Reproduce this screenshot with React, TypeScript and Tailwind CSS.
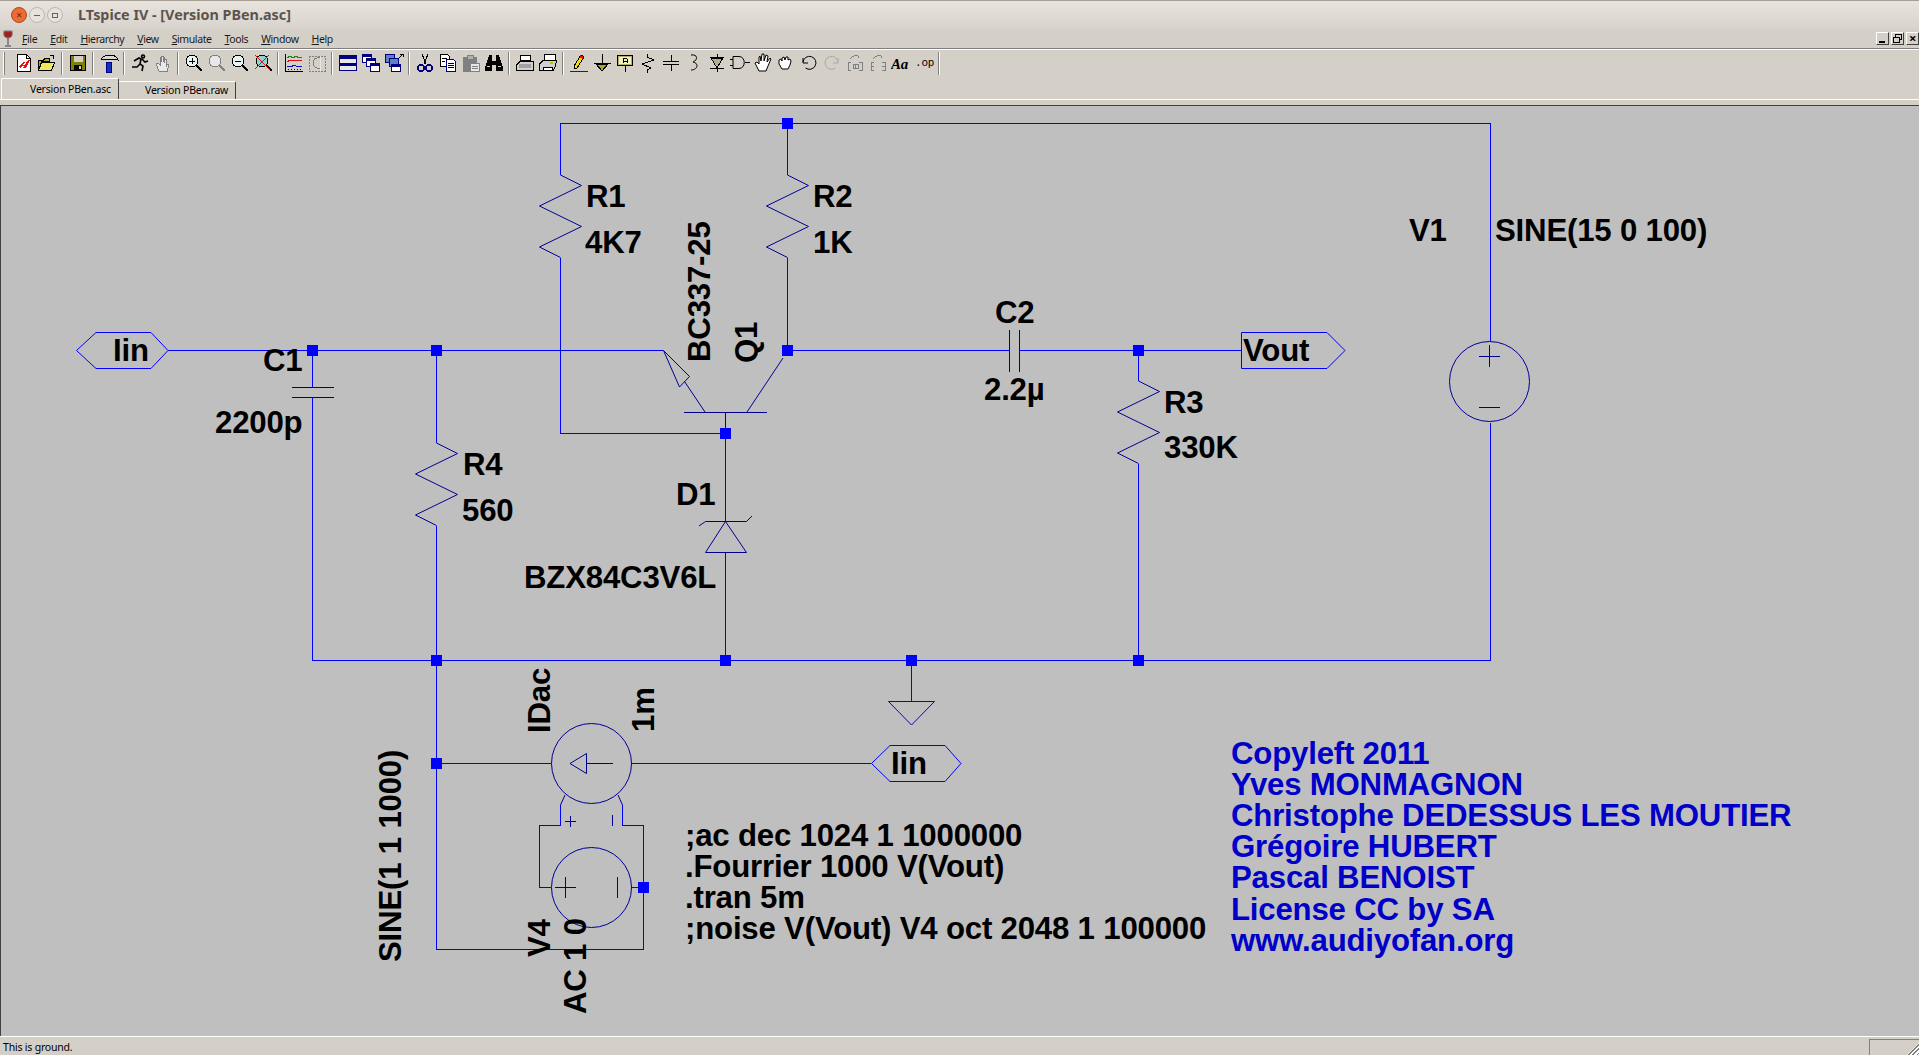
import React from 'react';

const WIRE = '#0000ff';
const SYM = '#000090';

const Sep = () => (
  <div className="w-[2px] h-[23px] mx-[3px] border-l border-l-[#808080] border-r border-r-white shrink-0" />
);

const Btn: React.FC<{ children: React.ReactNode }> = ({ children }) => (
  <div className="w-[23px] h-[23px] flex items-center justify-center shrink-0">
    <svg width="20" height="20" viewBox="0 0 20 20" fill="none" shapeRendering="crispEdges">
      {children}
    </svg>
  </div>
);

const G = '#808080';

const toolbar: (React.ReactNode | 'sep')[] = [
  <>
    <path d="M3.5 1.5h9l4 4v13h-13z" fill="#fff" stroke="#000" />
    <path d="M12.5 1.5v4h4" stroke="#000" />
    <path d="M5 14l4-5h2l-2 3h2l3-5h2l-4 8h-3l1-2H8l-1 2z" fill="#e81010" />
  </>,
  <>
    <path d="M1.5 7.5h5l1-2h5v3h-8l-3 9z" fill="#b8a800" stroke="#000" />
    <path d="M4.5 9.5h13l-3 8h-13z" fill="#f0e860" stroke="#000" />
    <path d="M13 2l4 1-1 3" stroke="#000" />
  </>,
  'sep',
  <>
    <path d="M2.5 2.5h15v15h-15z" fill="#808000" stroke="#000" />
    <path d="M5.5 3h9v6h-9z" fill="#d4d0c8" />
    <path d="M6 12h8v5H6z" fill="#000" />
    <path d="M11 13h2v3h-2z" fill="#d4d0c8" />
  </>,
  'sep',
  <>
    <path d="M2 7c1-3 5-5 9-5 4 0 7 2 8 5l-4-1H6c-2 0-3 0-4 1z" fill="#d8d8d8" stroke="#000" />
    <path d="M7.5 9h5v10h-5z" fill="#1030c0" stroke="#000080" />
  </>,
  'sep',
  <>
    <path d="M13 2c-2 0-2 2 0 3 2 0 2-3 0-3zM4 8l5-3 2 1-1 5 3 2-1 5M10 11l-3 3-5 0M12 6l3 3 3-1" stroke="#000" strokeWidth="1.6" shapeRendering="auto" />
  </>,
  <>
    <path d="M6 18l-3-7 2-1 2 2V4h1.5v5-6H10v6-5h1.5v6-4H13v8l1-3h2l-2 8z" fill="#e8e8e8" stroke={G} />
  </>,
  'sep',
  <>
    <circle cx="8" cy="8" r="6" fill="#e8f4f4" stroke="#000" />
    <path d="M5 8h6M8 5v6" stroke="#000" />
    <path d="M12 12l6 6" stroke="#000" strokeWidth="2" />
  </>,
  <>
    <circle cx="8" cy="8" r="6" fill="#e8e8e8" stroke={G} />
    <path d="M12 12l6 6" stroke={G} strokeWidth="2" />
  </>,
  <>
    <circle cx="8" cy="8" r="6" fill="#e8f4f4" stroke="#000" />
    <path d="M5 8h6" stroke="#000" />
    <path d="M12 12l6 6" stroke="#000" strokeWidth="2" />
  </>,
  <>
    <circle cx="9" cy="8" r="6" fill="#90d0d0" stroke="#000" />
    <path d="M13 12l6 6" stroke="#000" strokeWidth="2" />
    <path d="M2 2l15 15M2 16L16 2" stroke="#e01010" strokeWidth="1.4" />
  </>,
  'sep',
  <>
    <path d="M1.5 1v17h17" stroke="#000" />
    <path d="M3 5l3-2 3 2 3-2 3 2 3-1" stroke="#208020" />
    <path d="M3 9l3-2 4 1 3-1 5 1" stroke="#e01010" />
    <path d="M3 13l4 1 3-2 4 2 4-1" stroke="#1010c0" />
    <path d="M1 16h18" stroke="#000" strokeDasharray="1 2" />
  </>,
  <>
    <path d="M2 3h16v15H2z" stroke={G} strokeDasharray="2 1" />
    <path d="M13 5c-5-1-7 2-7 5s2 6 7 5" stroke={G} />
    <path d="M13 3v15" stroke="#e8e8e8" />
  </>,
  'sep',
  <>
    <path d="M1.5 2.5h17v15h-17z" fill="#e8e8e8" stroke="#000080" />
    <path d="M1 3h18v3H1zM1 10h18v3H1z" fill="#000080" />
  </>,
  <>
    <path d="M1.5 1.5h9v8h-9z" fill="#fff" stroke="#000080" />
    <path d="M5.5 5.5h9v8h-9z" fill="#fff" stroke="#000080" />
    <path d="M9.5 10.5h9v8h-9z" fill="#fff" stroke="#000080" />
    <path d="M2 2h8v2H2zM6 6h8v2H6zM10 11h8v2h-8z" fill="#000080" />
  </>,
  <>
    <path d="M1.5 1.5h9v8h-9z" fill="#6080c0" stroke="#000080" />
    <path d="M5.5 5.5h9v8h-9z" fill="#6080c0" stroke="#000080" />
    <path d="M7.5 11.5h9v7h-9z" fill="#fff" stroke="#000080" />
    <path d="M8 12h8v2H8z" fill="#000080" />
    <path d="M15 5l4-4M16 1h3v3" stroke="#000" />
  </>,
  'sep',
  <>
    <path d="M7 1l4 10M13 1L9 11" stroke="#000" />
    <circle cx="6" cy="15" r="3" stroke="#000080" strokeWidth="1.5" />
    <circle cx="14" cy="15" r="3" stroke="#000080" strokeWidth="1.5" />
  </>,
  <>
    <path d="M2.5 1.5h7l2 2v10h-9z" fill="#fff" stroke="#000" />
    <path d="M8.5 6.5h7l2 2v10h-9z" fill="#fff" stroke="#000080" />
    <path d="M4 5h5M4 8h3M10 10h6M10 12h6M10 14h6" stroke="#000" />
  </>,
  <>
    <path d="M2.5 4.5h13v14h-13z" fill={G} stroke={G} />
    <path d="M6 2h6v4H6z" fill="#b0b0b0" stroke={G} />
    <path d="M9.5 10.5h9v8h-9z" fill="#e8e8e8" stroke={G} />
    <path d="M11 13h6M11 15h6" stroke={G} />
  </>,
  <>
    <path d="M5 2h3v6h4V2h3l4 13v3h-7v-6H8v6H1v-3z" fill="#000" />
    <path d="M3 13h3M14 13h3" stroke="#d4d0c8" />
  </>,
  'sep',
  <>
    <path d="M5.5 2.5h10v5h-10z" fill="#fff" stroke="#000" />
    <path d="M1.5 12l4-4h13v9h-17z" fill="#d0d0d0" stroke="#000" />
    <path d="M4 11h12v4H4z" fill="#a0a0a0" />
  </>,
  <>
    <path d="M6.5 1.5h11v6h-11z" fill="#fff" stroke="#000" />
    <path d="M1.5 11l4-4h13l-1 6-2 4h-14z" fill="#d0d0d0" stroke="#000" />
    <path d="M5 14h9v3H5z" fill="#fff" stroke="#000" />
    <path d="M12 10h3" stroke="#c0c000" strokeWidth="2" />
  </>,
  'sep',
  <>
    <path d="M5 13L12 2l3 2-7 11-3 1z" fill="#f0e000" stroke="#000" />
    <path d="M11 3l3 2" stroke="#e01010" strokeWidth="2" />
    <path d="M1 18h18" stroke="#1010d0" />
  </>,
  <>
    <path d="M10 1v9M1.5 10.5h17" stroke="#000" />
    <path d="M4 11h12l-6 7z" fill="#a8a830" stroke="#000" />
  </>,
  <>
    <path d="M2.5 2.5h15v10h-15z" fill="#b8b060" stroke="#000" strokeWidth="1" />
    <path d="M4 4h12v7H4z" fill="#f0f0c0" />
    <path d="M8 10V6l2-1 2 1v4M8 8h4" stroke="#000" />
    <path d="M10 13v6" stroke="#000" />
  </>,
  <path d="M9 1v3l7 3-12 4 9 4-4 2v3" stroke="#000" />,
  <path d="M10 2v6M10 12v6M2 8.5h16M2 11.5h16" stroke="#000" />,
  <path d="M7 2c7-1 7 5 2 7 6 1 5 8-2 8" stroke="#000" shapeRendering="auto" />,
  <>
    <path d="M3 4.5h14M10 1v18M3 15.5h14" stroke="#000" />
    <path d="M4 5h12l-6 10z" fill="#b0b090" stroke="#000" />
  </>,
  <>
    <path d="M3 3.5h6c7 0 7 12 0 12H3zM0 6.5h3M0 12.5h3M15 9.5h5" stroke="#000" fill="#d4d0c8" shapeRendering="auto" />
  </>,
  <>
    <path d="M6 18L2 10l2-1 2 2 0-7 1-1 1 5 1-7 2 0 0 7 2-6 2 1-1 6 3-4 1 1-3 7-2 5z" fill="#fff" stroke="#000" shapeRendering="auto" />
  </>,
  <>
    <path d="M6 16l-3-5 0-4 2-1 1 2 0-3 2-1 1 3 1-3 2 0 0 3 2-1 1 2-1 4-2 4z" fill="#fff" stroke="#000" shapeRendering="auto" />
  </>,
  <>
    <path d="M4 9a6.5 6.5 0 1 1 2.5 6M4 5v5h5" stroke="#000" shapeRendering="auto" />
  </>,
  <>
    <path d="M16 9a6.5 6.5 0 1 0-2.5 6M16 5v5h-5" stroke="#a8a8a8" shapeRendering="auto" />
  </>,
  <>
    <path d="M3 9h3M3 9v8h3M14 9h3v8h-3" stroke={G} />
    <path d="M8 11h5v4H8zM10 11v4" stroke={G} />
    <path d="M5 6c2-3 6-4 8-3l1 2" stroke={G} />
  </>,
  <>
    <path d="M3 9h3M3 9v8h3M14 9h3v8h-3" stroke={G} />
    <path d="M3 13h3M14 13h3" stroke={G} />
    <path d="M5 6c2-3 6-4 8-3l1 2" stroke={G} />
  </>,
  <text x="0" y="16" fontFamily="'Liberation Serif', serif" fontStyle="italic" fontWeight="700" fontSize="15" fill="#000">Aa</text>,
  <text x="1" y="13" fontFamily="'Liberation Mono', monospace" fontSize="11" fill="#000">.op</text>,
  'sep',
];

const menus: [string, string][] = [
  ['F', 'ile'],
  ['E', 'dit'],
  ['H', 'ierarchy'],
  ['V', 'iew'],
  ['S', 'imulate'],
  ['T', 'ools'],
  ['W', 'indow'],
  ['H', 'elp'],
];

const Junction: React.FC<{ x: number; y: number }> = ({ x, y }) => (
  <rect x={x - 5} y={y - 5} width={11} height={11} fill={WIRE} />
);

// zigzag for a resistor, y = top of the symbol
const Res: React.FC<{ x: number; y: number }> = ({ x, y }) => (
  <path
    d={`M${x + 0.5} ${y}l21 10.5-42 20.5 42 20.5-42 20.5 21 10.5`}
    fill="none"
    stroke={SYM}
    strokeWidth={1}
    shapeRendering="auto"
  />
);

const Lbl: React.FC<{ x: number; y: number; up?: boolean; fill?: string; children: React.ReactNode }> = ({
  x,
  y,
  up,
  fill = '#000',
  children,
}) => (
  <text
    x={x}
    y={y}
    fill={fill}
    fontSize={31.2}
    fontWeight={700}
    fontFamily="'Liberation Sans', Arial, sans-serif"
    transform={up ? `rotate(-90 ${x} ${y})` : undefined}
    xmlSpace="preserve"
  >
    {children}
  </text>
);

const Schematic = () => (
  <svg width="1917" height="930" viewBox="1 106 1917 930" className="block" shapeRendering="crispEdges">
    {/* wires */}
    <g fill="none" stroke={WIRE} strokeWidth={1}>
      <path d="M560.5 175V123.5H1490.5V341M1490.5 423V660.5H312.5V397" />
      <path d="M787.5 123.5V175M787.5 258V350.5" />
      <path d="M560.5 258V433.5H725.5" />
      <path d="M168 350.5H663M312.5 350.5V387M436.5 350.5V443M436.5 526V949.5H643.5V825.5H622.5V805" />
      <path d="M787.5 350.5H1009M1019 350.5H1241M1138.5 350.5V381M1138.5 464V660.5" />
      <path d="M725.5 433.5V521M725.5 552V660.5M911.5 660.5V701" />
      <path d="M436.5 763.5H551M631 763.5H871M631 887.5H643.5" />
      <path d="M560.5 805V825.5H539.5V887.5H551" />
    </g>
    {/* symbols */}
    <g fill="none" stroke={SYM} strokeWidth={1}>
      <path d="M292 387.5H334M292 397.5H334" />
      <path d="M1009.5 330V372M1019.5 330V372" />
      <path d="M684 412.5H767M725.5 412.5V433" />
      <g shapeRendering="auto">
        <path d="M663.5 350.5L689.5 376.5 679.5 387ZM684.5 381.5L705 412M747 412L783 358" />
        <path d="M705.5 521.5H746.5M699 526L705.5 521.5M746.5 521.5L752 516M725.5 521.5L705.5 552.5H746.5Z" />
        <circle cx="591.5" cy="763.5" r="40" />
        <circle cx="591.5" cy="887.5" r="40" />
        <circle cx="1489.5" cy="381.5" r="40" />
        <path d="M565 795L560.5 805M618 795L622.5 805" />
        <path d="M613 763.5H586.5M586.5 753.5V773.5L570 763.5Z" />
      </g>
      <path d="M555 887.5H576M565.5 877V898M617.5 877V898" />
      <path d="M565 821.5H576M570.5 816V827M612.5 815V826" />
      <path d="M1479 356.5H1500M1489.5 345V367M1479 407.5H1500" />
    </g>
    <Res x={560} y={175} />
    <Res x={787} y={175} />
    <Res x={436} y={443} />
    <Res x={1138} y={381} />
    {/* net labels */}
    <g fill="none" stroke={WIRE} strokeWidth={1} shapeRendering="auto">
      <path d="M76.5 350.5L96 332.5H151L168 350.5 151 368.5H96Z" />
      <path d="M1241.5 332.5H1327L1345 350.5 1327 368.5H1241.5Z" />
      <path d="M871.5 763.5L890 745.5H945L961 763.5 945 781.5H890Z" />
      <path d="M888.5 701.5H934.5L911.5 725Z" />
    </g>
    {[
      [787, 123],
      [312, 350],
      [436, 350],
      [787, 350],
      [1138, 350],
      [725, 433],
      [436, 660],
      [725, 660],
      [911, 660],
      [1138, 660],
      [436, 763],
      [643, 887],
    ].map(([x, y]) => (
      <Junction key={`${x}-${y}`} x={x} y={y} />
    ))}
    {/* labels */}
    <Lbl x={113} y={361}>Iin</Lbl>
    <Lbl x={263} y={371}>C1</Lbl>
    <Lbl x={215} y={433}>2200p</Lbl>
    <Lbl x={463} y={475}>R4</Lbl>
    <Lbl x={462} y={521}>560</Lbl>
    <Lbl x={586} y={207}>R1</Lbl>
    <Lbl x={585} y={253}>4K7</Lbl>
    <Lbl x={813} y={207}>R2</Lbl>
    <Lbl x={813} y={253}>1K</Lbl>
    <Lbl x={710} y={362} up>BC337-25</Lbl>
    <Lbl x={757} y={363} up>Q1</Lbl>
    <Lbl x={995} y={323}>C2</Lbl>
    <Lbl x={984} y={400}>2.2µ</Lbl>
    <Lbl x={1164} y={413}>R3</Lbl>
    <Lbl x={1164} y={458}>330K</Lbl>
    <Lbl x={1243} y={361}>Vout</Lbl>
    <Lbl x={1409} y={241}>V1</Lbl>
    <Lbl x={1495} y={241}>SINE(15 0 100)</Lbl>
    <Lbl x={676} y={505}>D1</Lbl>
    <Lbl x={524} y={588}>BZX84C3V6L</Lbl>
    <Lbl x={550} y={733} up>IDac</Lbl>
    <Lbl x={654} y={732} up>1m</Lbl>
    <Lbl x={891} y={774}>Iin</Lbl>
    <Lbl x={401} y={962} up>SINE(1 1 1000)</Lbl>
    <Lbl x={550} y={957} up>V4</Lbl>
    <Lbl x={586} y={1014} up>AC 1 0</Lbl>
    <Lbl x={685} y={846}>;ac dec 1024 1 1000000</Lbl>
    <Lbl x={685} y={877}>.Fourrier 1000 V(Vout)</Lbl>
    <Lbl x={685} y={908}>.tran 5m</Lbl>
    <Lbl x={685} y={939}>;noise V(Vout) V4 oct 2048 1 100000</Lbl>
    {[
      'Copyleft 2011',
      'Yves MONMAGNON',
      'Christophe DEDESSUS LES MOUTIER',
      'Grégoire HUBERT',
      'Pascal BENOIST',
      'License CC by SA',
      'www.audiyofan.org',
    ].map((t, i) => (
      <Lbl key={t} x={1231} y={764 + i * 31.1} fill="#0000c8">{t}</Lbl>
    ))}
  </svg>
);

export default function App() {
  return (
    <div className="w-[1919px] h-[1055px] flex flex-col overflow-hidden bg-[#d4d0c8] text-[10.5px] tracking-[-0.2px] text-black font-['Noto_Sans',sans-serif]">
      {/* title bar */}
      <div className="h-[29px] flex items-center pl-[11px] shrink-0 border-t border-t-[#a89f94] bg-gradient-to-b from-[#e8e3dd] to-[#d8d3cc]">
        <div className="w-[16px] h-[16px] rounded-full bg-[#ec6a34] border border-[#b04a20] flex items-center justify-center text-[10px] leading-none text-[#5a2a10]">×</div>
        <div className="w-[16px] h-[16px] ml-[2px] rounded-full bg-[#e6e2dc] border border-[#bdb7ae] flex items-center justify-center">
          <div className="w-[6px] h-[1px] bg-[#6a6258]" />
        </div>
        <div className="w-[16px] h-[16px] ml-[2px] rounded-full bg-[#e6e2dc] border border-[#bdb7ae] flex items-center justify-center">
          <div className="w-[6px] h-[5px] border border-[#6a6258]" />
        </div>
        <span className="ml-[15px] text-[14.35px] tracking-normal font-bold text-[#5c544c]">LTspice IV - [Version PBen.asc]</span>
      </div>

      {/* menu bar */}
      <div className="h-[20px] flex items-center shrink-0 border-b border-b-[#808080] relative">
        <svg width="10" height="18" viewBox="0 0 10 18" className="ml-[3px] mr-[9px]" fill="none">
          <path d="M1 1h8c1 5-1 7-4 7S0 6 1 1z" fill="#a02020" stroke="#808080" />
          <path d="M5 8v7M2 16h6" stroke="#707070" strokeWidth="1.5" />
        </svg>
        <div className="flex gap-[13px] text-[#1a1a1a] tracking-[-0.4px] pt-[2px]">
          {menus.map(([u, rest]) => (
            <span key={u + rest}>
              <span className="underline">{u}</span>
              {rest}
            </span>
          ))}
        </div>
        <div className="ml-auto flex gap-[2px] pr-0">
          <div className="w-[13px] h-[13px] bg-[#d4d0c8] border-t border-l border-t-white border-l-white border-b border-r border-b-[#404040] border-r-[#404040] relative">
            <div className="absolute left-[2px] bottom-[1px] w-[6px] h-[2px] bg-[#000]" />
          </div>
          <div className="w-[13px] h-[13px] bg-[#d4d0c8] border-t border-l border-t-white border-l-white border-b border-r border-b-[#404040] border-r-[#404040] relative">
            <div className="absolute left-[3px] top-[1px] w-[7px] h-[6px] border border-[#000]" />
            <div className="absolute left-[1px] top-[4px] w-[7px] h-[6px] border border-[#000] bg-[#d4d0c8]" />
          </div>
          <div className="w-[13px] h-[13px] bg-[#d4d0c8] border-t border-l border-t-white border-l-white border-b border-r border-b-[#404040] border-r-[#404040] flex items-center justify-center text-[13px] leading-none font-bold">×</div>
        </div>
      </div>

      {/* toolbar */}
      <div className="h-[29px] flex items-center shrink-0 border-t border-t-white pl-[3px] pb-[2px]">
        <div className="w-[2px] h-[23px] border-l border-l-white border-r border-r-[#808080] mr-[7px] shrink-0" />
        {toolbar.map((item, i) => (item === 'sep' ? <Sep key={i} /> : <Btn key={i}>{item}</Btn>))}
      </div>

      {/* tabs */}
      <div className="h-[22px] flex items-end shrink-0 pl-[1px] border-b border-b-white whitespace-nowrap">
        <div className="w-[118px] h-[21px] pl-[28px] pt-[2px] border-t border-l border-r border-t-white border-l-white border-r-[#404040] rounded-t-[2px] leading-[16px]">
          Version PBen.asc
        </div>
        <div className="w-[117px] h-[18px] pl-[26px] border-t border-r border-t-white border-r-[#404040] leading-[17px] rounded-tr-[2px]">
          Version PBen.raw
        </div>
      </div>

      {/* schematic */}
      <div className="mt-[5px] flex-1 min-h-0 bg-[#bfbfbf] border-t border-l border-t-[#404040] border-l-[#404040] overflow-hidden">
        <Schematic />
      </div>

      {/* status bar */}
      <div className="h-[19px] flex items-center shrink-0 border-t border-t-white relative pl-[3px] pt-[2px]">
        <span className="leading-none">This is ground.</span>
        <div className="absolute right-0 top-[2px] bottom-0 w-[50px] border-t border-l border-t-[#808080] border-l-[#808080]" />
        <div className="absolute right-0 bottom-0 w-[12px] h-[12px] bg-[repeating-linear-gradient(135deg,#808080_0,#808080_1px,#ffffff_1px,#ffffff_3px)] [clip-path:polygon(100%_0,100%_100%,0_100%)]" />
      </div>
    </div>
  );
}
